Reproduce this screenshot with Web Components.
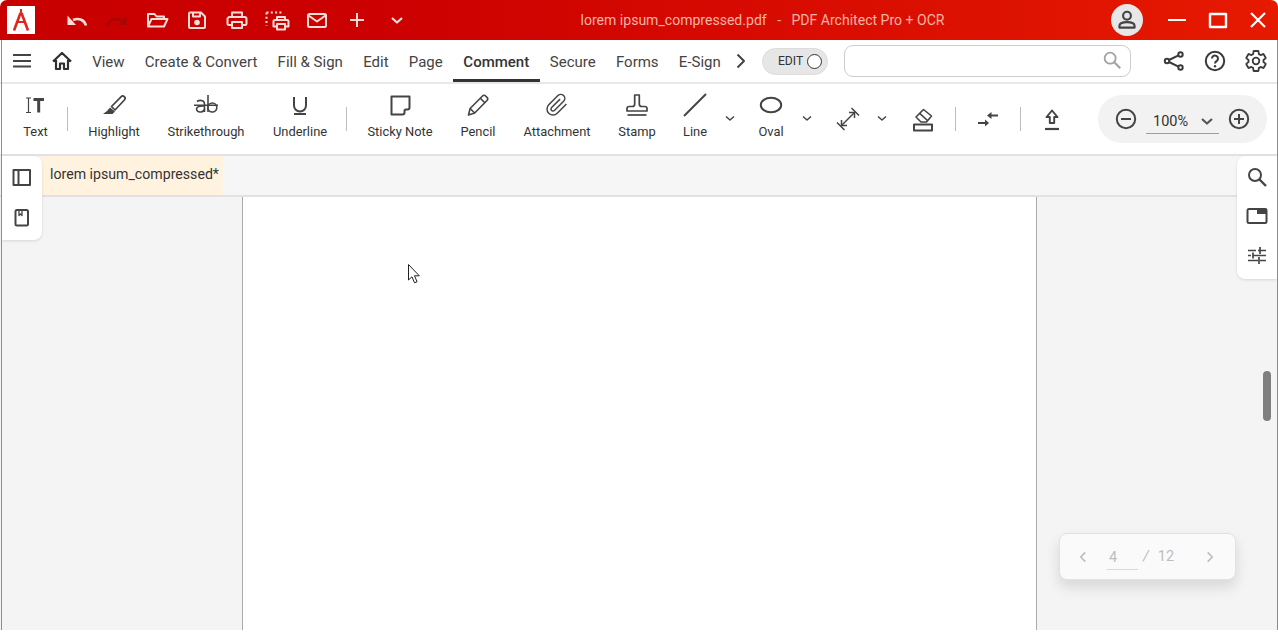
<!DOCTYPE html>
<html lang="en"><head><meta charset="utf-8"><title>PDF Architect</title>
<style>
html,body{margin:0;padding:0;background:#fff;font-family:Roboto,"Liberation Sans",sans-serif;overflow:hidden}
</style></head><body>
<app-window>
  <title-bar slot="title" heading="lorem ipsum_compressed.pdf" app="PDF Architect Pro + OCR"></title-bar>
  <menu-bar slot="menu"></menu-bar>
  <tool-bar slot="tools"></tool-bar>
  <tab-strip slot="tabs">lorem ipsum_compressed*</tab-strip>
  <doc-area slot="doc"></doc-area>
</app-window>
<script>
const PATHS={
undo:'<path d="M21 17.5C19.5 12 14 9.5 8 12" stroke-width="2.600"/><path d="M2.5 7.5V17H11Z" fill="currentColor" stroke="none"/>',
redo:'<path d="M3 17.5C4.5 12 10 9.5 16 12" stroke-width="2.600"/><path d="M21.5 7.5V17H13Z" fill="currentColor" stroke="none"/>',
folder:'<path d="M3 18.5V6h6.5l2 2.5H19V11"/><path d="M3 18.5L6.5 11H22.5L19 18.5Z"/>',
save:'<path d="M4 5.5a1 1 0 0 1 1-1h11l4 4V19a1 1 0 0 1-1 1H5a1 1 0 0 1-1-1Z"/><path d="M8 5v3.5h7V5"/><circle cx="12" cy="14.5" r="2.8" fill="currentColor" stroke="none"/>',
print:'<path d="M7 9V4.500h10V9"/><path d="M7 17H4a1.500 1.500 0 0 1-1.500-1.500V11A2 2 0 0 1 4.500 9h15a2 2 0 0 1 2 2v4.500A1.500 1.500 0 0 1 20 17h-3"/><path d="M7 14h10v6H7Z"/>',
printsel:'<path d="M1.500 4.500H17M1.500 4.500V18" stroke-dasharray="2 2.300"/><path d="M12 12V9h8v3"/><path d="M12 18.500H8.500v-5a1.500 1.500 0 0 1 1.500-1.500h12a1.500 1.500 0 0 1 1.500 1.500v5H20"/><path d="M12 16h8v5.500h-8Z"/>',
mail:'<rect x="3" y="6" width="18" height="13" rx="1.500"/><path d="M3.500 7.500L12 13.500l8.500-6"/>',
plus:'<path d="M12 5v14M5 12h14"/>',
chev:'<path d="M7 10l5 4.500 5-4.500" stroke-width="2.200"/>',
small:'<path d="M8 10.500l4 3.500 4-3.500" stroke-width="1.500"/>',
person:'<circle cx="12" cy="8" r="3.600"/><path d="M5 19v-1.500C5 15 8.500 14 12 14s7 1 7 3.500V19Z"/>',
min:'<path d="M3 12h18"/>',
max:'<rect x="4" y="6" width="16" height="13" stroke-width="2.400"/>',
close:'<path d="M5 5l14 14M19 5L5 19" stroke-width="2.200"/>',
burger:'<path d="M3 6h18M3 12h18M3 17.500h18"/>',
home:'<path d="M3 12.500L12 4l9 8.500M6 11v9h4v-5.500h4V20h4v-9" stroke-width="2.200"/>',
right:'<path d="M8.500 5.500L15 12l-6.500 6.500" stroke-width="2"/>',
search:'<circle cx="10" cy="10" r="6"/><path d="M14.500 14.500L21 21" stroke-width="2.400"/>',
share:'<circle cx="5" cy="12" r="2.200"/><circle cx="18.500" cy="5.500" r="2.200"/><circle cx="18.500" cy="18.500" r="2.200"/><path d="M7 11l9.500-4.700M7 13l9.500 4.700"/>',
help:'<circle cx="12" cy="12" r="9.200"/><path d="M9 9.500a3 3 0 1 1 4.800 2.400c-1.200.8-1.800 1.400-1.800 2.600" stroke-width="2"/><circle cx="12" cy="17.300" r="1.200" fill="currentColor" stroke="none"/>',
gear:'<path d="M19.430 12.980c.04-.32.07-.64.07-.98s-.03-.66-.07-.98l2.110-1.650c.19-.15.24-.42.12-.64l-2-3.460c-.12-.22-.39-.3-.61-.22l-2.490 1c-.52-.4-1.080-.73-1.690-.98l-.38-2.650C14.460 2.180 14.250 2 14 2h-4c-.25 0-.46.18-.49.42l-.38 2.650c-.61.25-1.170.59-1.690.98l-2.490-1c-.23-.09-.49 0-.61.22l-2 3.460c-.13.22-.07.49.12.64l2.110 1.650c-.04.32-.07.65-.07.98s.03.66.07.98l-2.110 1.650c-.19.15-.24.42-.12.64l2 3.460c.12.22.39.3.61.22l2.490-1c.52.4 1.080.73 1.690.98l.38 2.650c.03.24.24.42.49.42h4c.25 0 .46-.18.49-.42l.38-2.650c.61-.25 1.170-.59 1.690-.98l2.490 1c.23.09.49 0 .61-.22l2-3.460c.12-.22.07-.49-.12-.64l-2.110-1.650z" stroke-width="1.800"/><circle cx="12" cy="12" r="3.300" stroke-width="1.800"/>',
itext:'<path d="M2 5h5M2 19.500h5M4.500 5v14.500" stroke-width="1.200"/><path d="M9.500 6.500h10.500M14.700 6.500v13" stroke-width="3"/>',
marker:'<path d="M9.500 13.500L19 3.800a2.300 2.300 0 0 1 3.400 3.200L13 17Z" stroke-width="1.700"/><path d="M8 14.500l5 4-2.500 2.500H1l4-3Z" fill="currentColor" stroke="none"/>',
strike:'<path d="M3 8.500Q6 6.500 9 8q1.500 1 1.500 3v8" stroke-width="1.600"/><path d="M10.500 13Q3 12.500 2.500 16q.5 3.500 4.500 3 3-.5 3.500-3" stroke-width="1.600"/><path d="M14 2v17" stroke-width="1.600"/><circle cx="18.300" cy="14.500" r="4.500" stroke-width="1.600"/><path d="M0 12.200h24" stroke-width="1.500"/>',
under:'<path d="M6 4v8.500a6 6 0 0 0 12 0V4"/><path d="M6 21h12"/>',
note:'<path d="M3.500 3.500H21.500V14.500q0 2-2 2H18q-1.500 0-1.500 1.500v1.500q0 2-2 2H3.500Z"/>',
pencil:'<path d="M2.500 22l1.600-6.500L16.500 3a2.200 2.200 0 0 1 3.100 0l1.400 1.400a2.200 2.200 0 0 1 0 3.100L8.700 20Z" stroke-width="1.600"/><path d="M14.300 5.200l4.500 4.500M4.100 15.500l4.600 4.500" stroke-width="1.600"/>',
clip:'<path d="M21.440 11.050l-9.190 9.190a6 6 0 0 1-8.490-8.490l9.190-9.190a4 4 0 0 1 5.660 5.660l-9.200 9.190a2 2 0 0 1-2.830-2.830l8.490-8.480" stroke-width="1.500"/>',
stamp:'<path d="M9.700 2h4.600v9q0 2.500 2.500 2.500h3q2.200 0 2.200 2.200V18H2v-2.300q0-2.200 2.200-2.200h3q2.500 0 2.500-2.500Z" stroke-width="1.700"/><path d="M2.500 22H21.500" stroke-width="1.700"/>',
line:'<path d="M1 23L23 1"/>',
oval:'<ellipse cx="12" cy="12" rx="10.200" ry="7.200"/>',
measure:'<path d="M5 19L19 5" stroke-width="1.500"/><path d="M5.500 13v5.500H11M13 5.500h5.500V11" stroke-width="1.500"/><path d="M1 15.500L8.500 23M15.500 1L23 8.500" stroke-width="1.500"/>',
eraser:'<rect x="3" y="17.500" width="18" height="6"/><path d="M5 10L12.500 2.500 20.500 9 15.500 15H10Z" stroke-width="1.600"/><path d="M8.700 6.300L16.500 13.500" stroke-width="1.600"/>',
compress:'<path d="M2 16h8" /><path d="M9 12.500L13 16 9 19.500Z" fill="currentColor" stroke="none"/><path d="M22 8.500h-9"/><path d="M15.500 5L11 8.500 15.500 12Z" fill="currentColor" stroke="none"/>',
upload:'<path d="M12 3.500L6.500 10h3.300v6h4.400v-6h3.300Z" stroke-width="1.900"/><path d="M5 22h14" stroke-width="2.200"/>',
zminus:'<circle cx="12" cy="12" r="9.200"/><path d="M7 12h10"/>',
zplus:'<circle cx="12" cy="12" r="9.200"/><path d="M7 12h10M12 7v10"/>',
panel:'<rect x="3.500" y="4" width="16.500" height="15"/><path d="M8.500 4v15"/>',
book:'<rect x="5.500" y="4" width="12.500" height="15.500" rx="1.500"/><path d="M9 4.500v5l1.500-1.500L12 9.500v-5" stroke-width="1.300"/>',
pip:'<rect x="2.500" y="5" width="19" height="14" rx="1.500"/><path d="M12 4.500h9.500V10H12Z" fill="currentColor" stroke="none"/>',
sliders:'<path d="M3 7.500h8M13 7.500h8M15 4v7M3 12.500h3M8 12.500h13M8 9.500v6M3 17.500h10M15 17.500h6M14 14v7" stroke-width="1.700"/>',
left:'<path d="M14.500 7L9.500 12l5 5" stroke-width="1.800"/>',
rightsm:'<path d="M9.500 7l5 5-5 5" stroke-width="1.800"/>'
};
function tpl(html){const t=document.createElement('template');t.innerHTML=html;return t;}
function def(name,html,extra){
  const t=tpl(html);
  customElements.define(name,class extends HTMLElement{
    constructor(){super();this.attachShadow({mode:'open'}).appendChild(t.content.cloneNode(true));}
    connectedCallback(){if(extra)extra.call(this);}
  });
}
customElements.define('x-ic',class extends HTMLElement{
  connectedCallback(){
    if(this.shadowRoot)return;
    const s=this.getAttribute('s')||24;
    this.attachShadow({mode:'open'}).innerHTML=`<style>:host{display:block;width:${s}px;height:${s}px;flex:none;color:inherit}svg{display:block;overflow:visible}</style><svg width="${s}" height="${s}" viewBox="0 0 24 24" fill="none" stroke="currentColor" stroke-width="2" stroke-linejoin="round" stroke-linecap="butt">${PATHS[this.getAttribute('n')]||''}</svg>`;
  }
});
def('app-window',`<style>
:host{display:flex;flex-direction:column;width:1278px;height:630px;box-sizing:border-box;position:relative;background:#fff;border-radius:7px 7px 0 0;overflow:hidden}
.edge{position:absolute;top:40px;bottom:0;width:1px;background:#8c8c8c;z-index:5}
.l{left:1px}.r{right:0}
</style><slot name="title"></slot><slot name="menu"></slot><slot name="tools"></slot><slot name="tabs"></slot><slot name="doc"></slot><div class="edge l"></div><div class="edge r"></div>`);

def('title-bar',`<style>
:host{display:flex;align-items:center;height:40px;flex:none;background:linear-gradient(90deg,#c90000 0,#cc0000 30%,#e61a00 100%);color:#fbdcd6;font:14px Roboto,"Liberation Sans",sans-serif}
.logo{width:28px;height:28px;background:#fff;margin-left:7px;flex:none;display:block}
.icons{display:flex;margin-left:22px}
.b{width:40px;height:40px;display:flex;align-items:center;justify-content:center}
.dim{color:#a80505}
.t{flex:1;text-align:center;color:#f7b3a6;white-space:pre;padding-right:3px;font-size:14.060px}
.av{width:32px;height:32px;border-radius:50%;background:#e7e7e7;color:#444;display:flex;align-items:center;justify-content:center;flex:none;margin-right:12px}
.w{width:41px;height:40px;display:flex;align-items:center;justify-content:center;color:#fff}
.w:last-child{width:40px;margin-right:-6px;padding-right:6px}
.ws{display:flex;margin-left:1px}
</style>
<svg class="logo" viewBox="0 0 28 28" fill="none" stroke="#e1251b" stroke-width="2.600"><path d="M7 24.500L13.500 7M21 24.500L14.500 7"/><path d="M9 16h10" stroke-width="2"/><path d="M14 3v5" stroke-width="2"/></svg>
<div class="icons">
<div class="b"><x-ic n="undo"></x-ic></div><div class="b dim"><x-ic n="redo"></x-ic></div><div class="b"><x-ic n="folder"></x-ic></div><div class="b"><x-ic n="save"></x-ic></div><div class="b"><x-ic n="print"></x-ic></div><div class="b"><x-ic n="printsel"></x-ic></div><div class="b"><x-ic n="mail"></x-ic></div><div class="b"><x-ic n="plus"></x-ic></div><div class="b"><x-ic n="chev"></x-ic></div>
</div>
<div class="t" id="t"></div>
<div class="av"><x-ic n="person" s="26"></x-ic></div>
<div class="ws"><div class="w"><x-ic n="min"></x-ic></div><div class="w"><x-ic n="max"></x-ic></div><div class="w"><x-ic n="close"></x-ic></div></div>`,
function(){this.shadowRoot.getElementById('t').textContent=this.getAttribute('heading')+'   -   '+this.getAttribute('app');});

def('menu-item',`<style>
:host{display:flex;align-items:center;height:100%;padding:1px 10.130px 0;box-sizing:border-box;color:#444;font-size:15px;white-space:nowrap;position:relative}
:host([active]){color:#333;font-weight:500;padding:1px 10.500px 0}
:host([active])::after{content:"";position:absolute;left:0;right:0;bottom:0;height:3px;background:#333}
</style><slot></slot>`);

def('menu-bar',`<style>
:host{display:flex;align-items:center;height:44px;flex:none;box-sizing:border-box;border-bottom:2px solid #e8e8e8;font-family:Roboto,"Liberation Sans",sans-serif;color:#444;padding-left:10px;background:#fff}
.tog{display:flex;align-items:center;gap:4px;width:66px;height:27px;box-sizing:border-box;border-radius:14px;background:#e6e6e6;border:1px solid #dcdcdc;padding-left:15px;font-size:12.200px;color:#333;margin-left:9px;flex:none}
.tog i{width:15px;height:15px;border-radius:50%;border:1.500px solid #333;background:#fff;box-sizing:border-box;display:block}
.srch{width:287px;height:32px;box-sizing:border-box;border:1px solid #ccc;border-radius:9px;margin-left:16px;flex:none;display:flex;align-items:center;justify-content:flex-end;padding:0 7px 2px 0;color:#a3a3a3}
.rt{display:flex;color:#3a3a3a;margin-left:23px}
.rt div{width:41px;display:flex;justify-content:center}
.m{height:100%;display:flex;align-items:stretch}
.home{color:#2e2e2e;margin:0 8px 0 16px}
</style>
<x-ic n="burger"></x-ic><x-ic class="home" n="home"></x-ic>
<div class="m"><menu-item>View</menu-item><menu-item>Create &amp; Convert</menu-item><menu-item>Fill &amp; Sign</menu-item><menu-item>Edit</menu-item><menu-item>Page</menu-item><menu-item active>Comment</menu-item><menu-item>Secure</menu-item><menu-item>Forms</menu-item><menu-item>E-Sign</menu-item></div>
<x-ic n="right" style="margin-left:-2px"></x-ic>
<div class="tog"><span>EDIT</span><i></i></div>
<div class="srch"><x-ic n="search" s="22"></x-ic></div>
<div class="rt"><div><x-ic n="share"></x-ic></div><div><x-ic n="help"></x-ic></div><div><x-ic n="gear"></x-ic></div></div>`);

customElements.define('tool-btn',class extends HTMLElement{
  connectedCallback(){
    if(this.shadowRoot)return;
    const l=this.getAttribute('label'),n=this.getAttribute('n');
    this.attachShadow({mode:'open'}).innerHTML=`<style>
:host{display:flex;flex-direction:column;align-items:center;flex:none;color:#444;width:24px}
.l{font-size:12.900px;line-height:16px;margin-top:7px;color:#333;white-space:nowrap}
</style><x-ic n="${n}"></x-ic>${l?`<div class="l">${l}</div>`:''}`;
  }
});
def('tool-sep',`<style>:host{display:block;width:1px;height:24px;background:#bdbdbd;flex:none;margin-top:14px}</style>`);
def('tool-chev',`<style>:host{display:flex;justify-content:center;width:16px;flex:none;margin-top:13px;color:#444}</style><x-ic n="small"></x-ic>`);
def('zoom-box',`<style>
:host{display:flex;align-items:center;width:169px;height:48px;border-radius:24px;background:#f2f2f2;flex:none;box-sizing:border-box;padding-left:16px;color:#444;font-size:14.500px;margin-top:2px}
.v{display:flex;align-items:center;width:73px;height:26px;border-bottom:1px solid #9e9e9e;margin:4px 8px 0 8px;box-sizing:border-box;padding-left:7px;color:#333}
.v span{flex:1;padding-top:2px}
.v x-ic{margin-right:0;color:#555}
</style><x-ic n="zminus"></x-ic><div class="v"><span>100%</span><x-ic n="chev"></x-ic></div><x-ic n="zplus"></x-ic>`);
def('tool-bar',`<style>
:host{display:flex;align-items:flex-start;height:70px;flex:none;box-sizing:border-box;padding:9px 0 0 15px;font-family:Roboto,"Liberation Sans",sans-serif;background:#fff}
.i{margin-top:14px}
</style>
<tool-btn n="itext" label="Text" style="width:41px"></tool-btn>
<tool-sep style="margin-left:11px"></tool-sep>
<tool-btn n="marker" label="Highlight" style="width:60px;margin-left:16px"></tool-btn>
<tool-btn n="strike" label="Strikethrough" style="width:84px;margin-left:20px"></tool-btn>
<tool-btn n="under" label="Underline" style="width:60px;margin-left:22px"></tool-btn>
<tool-sep style="margin-left:16px"></tool-sep>
<tool-btn n="note" label="Sticky Note" style="width:70px;margin-left:18px"></tool-btn>
<tool-btn n="pencil" label="Pencil" style="width:40px;margin-left:23px"></tool-btn>
<tool-btn n="clip" label="Attachment" style="width:70px;margin-left:24px"></tool-btn>
<tool-btn n="stamp" label="Stamp" style="width:40px;margin-left:25px"></tool-btn>
<tool-btn n="line" label="Line" style="width:30px;margin-left:23px"></tool-btn>
<tool-chev style="margin-left:12px"></tool-chev>
<tool-btn n="oval" label="Oval" style="width:30px;margin-left:18px"></tool-btn>
<tool-chev style="margin-left:13px"></tool-chev>
<tool-btn class="i" n="measure" style="margin-left:21px"></tool-btn>
<tool-chev style="margin-left:14px"></tool-chev>
<tool-btn class="i" n="eraser" style="margin-left:21px"></tool-btn>
<tool-sep style="margin-left:20px"></tool-sep>
<tool-btn class="i" n="compress" style="margin-left:20px"></tool-btn>
<tool-sep style="margin-left:20px"></tool-sep>
<tool-btn class="i" n="upload" style="margin-left:19px"></tool-btn>
<zoom-box style="margin-left:34px"></zoom-box>`);
def('tab-strip',`<style>
:host{display:flex;height:43px;flex:none;box-sizing:border-box;background:#f6f6f6;border-top:2px solid #e2e2e2;border-bottom:2px solid #e2e2e2;padding-left:42px;font:14.150px Roboto,"Liberation Sans",sans-serif;color:#333}
.tab{background:#fff3e0;width:181px;box-sizing:border-box;padding:0 0 4px 8px;display:flex;align-items:center;white-space:nowrap}
</style><div class="tab"><slot></slot></div>`);
def('float-panel',`<style>
:host{position:absolute;top:-41px;background:#fff;display:flex;flex-direction:column;align-items:center;color:#444;box-shadow:0 1px 3px rgba(0,0,0,.12);z-index:4;width:40px;box-sizing:border-box}
</style><slot></slot>`);
def('page-nav',`<style>
:host{position:absolute;left:1059px;top:336px;width:177px;height:47px;box-sizing:border-box;background:#fafafa;border:1px solid #e2e2e2;border-radius:8px;box-shadow:0 7px 14px rgba(0,0,0,.12);display:flex;align-items:center;color:#bdbdbd;font:14.500px Roboto,"Liberation Sans",sans-serif;padding-left:12px}
.n{width:31px;height:27px;box-sizing:border-box;border-bottom:1px solid #d8d8d8;margin-left:13px;padding:6px 0 0 2px;text-align:left}
.s{margin-left:5px;font-style:italic}
.c{margin-left:9px}
</style><x-ic n="left" s="22"></x-ic><div class="n"><span>4</span></div><span class="s">/</span><span class="c">12</span><x-ic n="rightsm" s="22" style="margin-left:25px"></x-ic>`);
def('doc-area',`<style>
:host{display:flex;justify-content:center;flex:1;min-height:0;background:#f4f4f4;position:relative;padding-right:2px}
.page{width:795px;box-sizing:border-box;background:#fff;border-left:1px solid #aaa;border-right:1px solid #aaa;margin-left:3px}
.thumb{position:absolute;left:1263px;top:174px;width:8px;height:50px;border-radius:4px;background:#7f7f7f}
.cur{position:absolute;left:408px;top:67px;z-index:3}
.lp{left:2px;height:84px;border-radius:0 8px 8px 0;padding-top:10px;gap:16px}
.rp{right:1px;height:123px;border-radius:8px 0 0 8px;padding-top:9px;gap:15px}
</style>
<div class="page"></div>
<svg class="cur" width="13" height="20" viewBox="0 0 13 20"><path d="M.5.500V16l3.500-3.200 2.500 6 2.600-1-2.600-6h4.800Z" fill="#fff" stroke="#222" stroke-width="1"/></svg>
<div class="thumb"></div>
<float-panel class="lp"><x-ic n="panel"></x-ic><x-ic n="book"></x-ic></float-panel>
<float-panel class="rp"><x-ic n="search"></x-ic><x-ic n="pip"></x-ic><x-ic n="sliders"></x-ic></float-panel>
<page-nav></page-nav>`);
</script>
</body></html>
